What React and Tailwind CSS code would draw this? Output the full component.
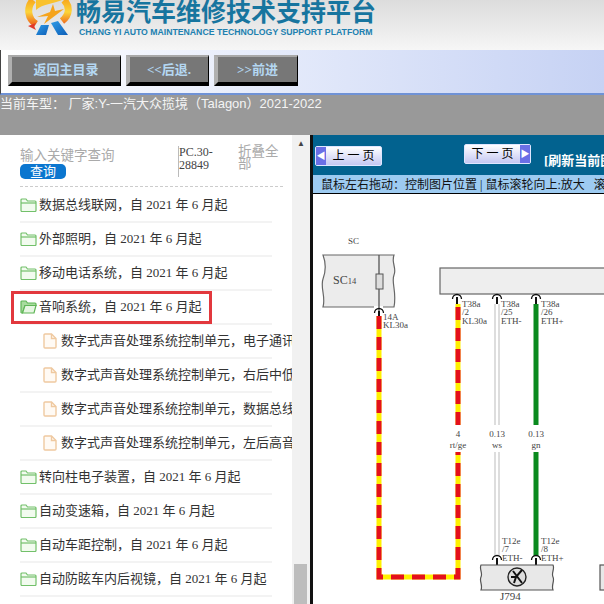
import React from 'react'

const sysBefore = ['数据总线联网', '外部照明', '移动电话系统']
const children = ['电子通讯', '右后中低', '数据总线', '左后高音']
const sysAfter = ['转向柱电子装置', '自动变速箱', '自动车距控制', '自动防眩车内后视镜']

const FolderIcon = () => (
  <svg width="17" height="14" viewBox="0 0 17 14" className="shrink-0" fill="#f2fbef" stroke="#72c06a" strokeWidth="1.2">
    <path d="M1 12.5V2a1 1 0 0 1 1-1h4l1.5 2H15a1 1 0 0 1 1 1v8.500a1 1 0 0 1-1 1H2a1 1 0 0 1-1-1z" />
    <path d="M1 5h15" />
  </svg>
)

const OpenFolderIcon = () => (
  <svg width="17" height="14" viewBox="0 0 17 14" className="shrink-0" fill="#a8dc9e" stroke="#5fb556" strokeWidth="1.2">
    <path d="M1 12.500V2a1 1 0 0 1 1-1h4l1.500 2H15a1 1 0 0 1 1 1v1.500H5L2.500 13H2a1 1 0 0 1-1-.5z" />
    <path d="M5 5.500h11L14 13H2.500z" fill="#e6f6e2" />
  </svg>
)

const FileIcon = () => (
  <svg width="14" height="16" viewBox="0 0 14 16" className="shrink-0" fill="#fffaf4" stroke="#efc9a0" strokeWidth="1.4">
    <path d="M1 2a1 1 0 0 1 1-1h6.500L13 5.500V14a1 1 0 0 1-1 1H2a1 1 0 0 1-1-1z" />
    <path d="M8.500 1v4.500H13" fill="none" />
  </svg>
)

const Row = ({ children: content }) => (
  <div className="flex items-center h-[34px] w-[252px] gap-[2px] border-b-2 border-[#f3f3f3] whitespace-nowrap">{content}</div>
)

const SystemRow = ({ name }) => (
  <Row>
    <FolderIcon />
    <span>{name}，自 2021 年 6 月起</span>
  </Row>
)

const NavButton = ({ label, w }) => (
  <button className={`${w} h-[31px] bg-[#777777] border-t-2 border-l-[4px] border-r border-b-[4px] border-t-[#a9a9a9] border-l-[#b0b0b0] border-r-black border-b-black text-[#b4d7f2] font-bold text-[13px]`}>
    {label}
  </button>
)

const PageButton = ({ label, right }) => (
  <button className={`flex items-center w-[67px] h-[20px] rounded-[2px] border border-[#dfe6ff] bg-gradient-to-b from-white to-[#c5c8f2] text-black text-[12px] ${right ? 'flex-row-reverse' : ''}`}>
    <span className="w-[10px] h-full bg-[#6a6fe6] text-white text-[9px] leading-[18px] text-center">{right ? '▶' : '◀'}</span>
    <span className="flex-1 text-center">{label}</span>
  </button>
)

const Logo = () => (
  <svg width="50" height="38" viewBox="24 0 50 38" className="absolute left-[24px] top-0">
    <defs>
      <linearGradient id="ring" x1="0" y1="0" x2="0" y2="1">
        <stop offset="0" stopColor="#f7a81d" />
        <stop offset="0.5" stopColor="#fcd53a" />
        <stop offset="1" stopColor="#ee6a1d" />
      </linearGradient>
      <linearGradient id="leg" x1="0" y1="0" x2="1" y2="1">
        <stop offset="0" stopColor="#2f9be6" />
        <stop offset="1" stopColor="#0d5fb8" />
      </linearGradient>
    </defs>
    <path d="M36 24C28 19 26 8 33 0M62 21C70 15 70 6 64 0" fill="none" stroke="url(#ring)" strokeWidth="7" />
    <path d="M36 0H62C56 3 42 4 36 10z" fill="#f9c22e" />
    <path d="M37 17L50 12L53 4L55 11L64 9L44 24L48 16z" fill="#f5a41c" />
    <path d="M28 26l8-3-2 3 2 4z" fill="#e0382c" />
    <path d="M41 25h8l-3 10H36z" fill="url(#leg)" />
    <path d="M51 23l7-2 10 14H58z" fill="url(#leg)" />
  </svg>
)

const Connector = ({ x, y }) => (
  <g>
    <path d={`M${x - 4.500} ${y + 3}a4.500 4.500 0 0 1 9 0`} fill="none" stroke="#111" strokeWidth="1.300" />
    <path d={`M${x} ${y + 8}v-7`} stroke="#111" strokeWidth="2" />
  </g>
)

const Label = ({ x, y, children: t, anchor }) => (
  <text x={x} y={y} fontSize="9" fill="#444" textAnchor={anchor} fontFamily="'Liberation Serif', serif">{t}</text>
)

const Diagram = () => (
  <svg width="291" height="410" viewBox="313 194 291 410" className="block">
    <Label x={348} y={244}>SC</Label>
    <path d="M323 255h71c-3 8 3 13 0 20s3 17 0 32H323c3-10-3-20 0-28s3-16 0-24z" fill="#ececec" stroke="#666" strokeWidth="1.200" />
    <rect x="374" y="306" width="9" height="3" fill="#fff" />
    <text x="333" y="284" fontSize="12" fill="#444" fontFamily="'Liberation Serif', serif">SC<tspan fontSize="8.500">14</tspan></text>
    <path d="M379 255v56" stroke="#555" strokeWidth="1.300" />
    <rect x="376" y="274" width="7" height="15" fill="#ddd" stroke="#555" />
    <Connector x={379} y={310} />
    <Label x={383} y={320}>14A</Label>
    <Label x={383} y={328}>KL30a</Label>

    <rect x="440" y="268" width="170" height="26" fill="#eeeeee" stroke="#666" strokeWidth="1.200" />
    <Connector x={457} y={296} />
    <Connector x={497} y={296} />
    <Connector x={536} y={296} />
    <Label x={462} y={307}>T38a</Label>
    <Label x={462} y={315}>/2</Label>
    <Label x={462} y={324}>KL30a</Label>
    <Label x={501} y={307}>T38a</Label>
    <Label x={501} y={315}>/25</Label>
    <Label x={501} y={324}>ETH-</Label>
    <Label x={541} y={307}>T38a</Label>
    <Label x={541} y={315}>/26</Label>
    <Label x={541} y={324}>ETH+</Label>

    <path d="M379 316V577H458V452M458 425V304" fill="none" stroke="#fff000" strokeWidth="5" />
    <path d="M379 316V577H458V452M458 425V304" fill="none" stroke="#e4101c" strokeWidth="5" strokeDasharray="13 8" />

    <path d="M495 304V425M499 304V425M495 452V556M499 452V556" stroke="#bbb" strokeWidth="1" fill="none" />
    <path d="M536 304V425M536 452V556" stroke="#0a8a1e" strokeWidth="5" fill="none" />

    <Label x={458} y={437} anchor="middle">4</Label>
    <Label x={458} y={448} anchor="middle">rt/ge</Label>
    <Label x={497} y={437} anchor="middle">0.13</Label>
    <Label x={497} y={448} anchor="middle">ws</Label>
    <Label x={536} y={437} anchor="middle">0.13</Label>
    <Label x={536} y={448} anchor="middle">gn</Label>

    <Label x={502} y={544}>T12e</Label>
    <Label x={502} y={552}>/7</Label>
    <Label x={502} y={561}>ETH-</Label>
    <Label x={541} y={544}>T12e</Label>
    <Label x={541} y={552}>/8</Label>
    <Label x={541} y={561}>ETH+</Label>

    <Connector x={497} y={557} />
    <Connector x={536} y={557} />
    <path d="M481 565h72c2 4-2 8 0 12s-2 8 0 13h-72c2-5-2-9 0-13s-2-8 0-12z" fill="#e8e8e8" stroke="#555" strokeWidth="1.200" />
    <circle cx="517" cy="577" r="9" fill="#ddd" stroke="#222" strokeWidth="1.400" />
    <path d="M513 571l9 12M522 570l-6 7-5 0M516 577l-2 6" fill="none" stroke="#111" strokeWidth="2" />
    <text x="500" y="600" fontSize="11" fill="#444" fontFamily="'Liberation Serif', serif">J794</text>
    <rect x="600" y="565" width="12" height="25" fill="#e8e8e8" stroke="#555" strokeWidth="1.200" />
  </svg>
)

export default function App() {
  return (
    <div lang="zh-CN" className="w-[604px] h-[604px] overflow-hidden flex flex-col font-['Liberation_Sans','Noto_Sans_CJK_SC',sans-serif]">
      <div className="relative h-[50px] shrink-0 overflow-hidden bg-gradient-to-b from-[#dcdcdc] to-[#f6f6f6]">
        <Logo />
        <div className="pl-[76px] -mt-[2px] text-[25px] leading-[28px] font-bold text-[#17759f] whitespace-nowrap">畅易汽车维修技术支持平台</div>
        <div className="pl-[79px] mt-[1px] text-[8.700px] leading-[10px] font-bold text-[#2080b0] whitespace-nowrap">CHANG YI AUTO MAINTENANCE TECHNOLOGY SUPPORT PLATFORM</div>
      </div>

      <div className="h-[45px] shrink-0 flex items-start gap-[5px] pl-[7px] pt-[5px] bg-gradient-to-r from-white to-[#c6d2f4] border-b-2 border-[#6f92d6] border-l border-l-[#444] font-['Liberation_Serif','Noto_Sans_CJK_SC',serif]">
        <NavButton label="返回主目录" w="w-[113px]" />
        <NavButton label="<<后退." w="w-[83px]" />
        <NavButton label=">>前进" w="w-[84px]" />
      </div>

      <div className="h-[40px] shrink-0 bg-[#999999] text-[#f4f4f4] text-[13px] leading-[17px] whitespace-nowrap">当前车型： 厂家:Y-一汽大众揽境（Talagon）2021-2022</div>

      <div className="flex flex-1 min-h-0">
        <div className="w-[292px] shrink-0 overflow-hidden bg-white pl-[20px] text-[13px] text-[#333] font-['Liberation_Serif','Noto_Sans_CJK_SC',serif]">
          <div className="flex h-[52px] w-[263px] mb-[2px] border-b border-dashed border-[#ccc] pt-[11px]">
            <div className="w-[158px] shrink-0 pt-[2px]">
              <div className="text-[13.500px] leading-[16px] text-[#aaaaaa] font-['Liberation_Sans','Noto_Sans_CJK_SC',sans-serif] whitespace-nowrap">输入关键字查询</div>
              <button className="block w-[46px] h-[15px] rounded-[5px] bg-[#0b76cf] text-white text-[13px] leading-[15px] font-['Liberation_Sans','Noto_Sans_CJK_SC',sans-serif]">查询</button>
            </div>
            <div className="w-[60px] shrink-0 h-[31px] border-l border-[#bbb] text-[12px] leading-[12.500px] text-[#444]">PC.30-<br />28849</div>
            <div className="w-[42px] text-[13.500px] leading-[12px] text-[#aaa] font-['Liberation_Sans','Noto_Sans_CJK_SC',sans-serif]">折叠全部</div>
          </div>

          {sysBefore.map(name => <SystemRow key={name} name={name} />)}

          <div className="relative">
            <Row>
              <OpenFolderIcon />
              <span>音响系统，自 2021 年 6 月起</span>
            </Row>
            <div className="absolute -left-[9px] top-0 w-[201px] h-[33px] border-[3px] border-[#e2383d]"></div>
          </div>

          {children.map(suffix => (
            <div key={suffix} className="flex items-center h-[34px] w-[272px] gap-[4px] pl-[23px] pb-[2px] whitespace-nowrap overflow-hidden relative">
              <FileIcon />
              <span>数字式声音处理系统控制单元，{suffix}</span>
              <div className="absolute left-0 bottom-0 w-[252px] h-[2px] bg-[#f3f3f3]"></div>
            </div>
          ))}

          {sysAfter.map(name => <SystemRow key={name} name={name} />)}
        </div>

        <div className="w-[18px] shrink-0 bg-[#f1f1f1] flex flex-col">
          <div className="text-[8px] leading-[14px] text-[#444] text-center pt-[2px]">▲</div>
          <div className="mt-auto ml-[2px] w-[13px] h-[40px] bg-[#bdbdbd]"></div>
        </div>

        <div className="flex-1 min-w-0 border-l-[3px] border-[#111] flex flex-col overflow-hidden font-['Liberation_Serif','Noto_Sans_CJK_SC',serif]">
          <div className="h-[40px] shrink-0 bg-[#02628f] flex items-start pl-[2px] whitespace-nowrap">
            <div className="mt-[11px]"><PageButton label="上 一 页" /></div>
            <div className="ml-[82px] mt-[9px]"><PageButton label="下 一 页" right /></div>
            <div className="ml-[13px] mt-[17px] text-white font-bold text-[13px] leading-[18px]">[刷新当前图片]</div>
          </div>
          <div className="h-[18px] shrink-0 bg-[#9dcbf1] border-b border-black pl-[8px] text-[12px] leading-[21px] text-[#111] whitespace-nowrap box-content">
            鼠标左右拖动：控制图片位置 | 鼠标滚轮向上:放大 &nbsp; 滚轮向下:缩小
          </div>
          <div className="flex-1 bg-white overflow-hidden">
            <Diagram />
          </div>
        </div>
      </div>
    </div>
  )
}
